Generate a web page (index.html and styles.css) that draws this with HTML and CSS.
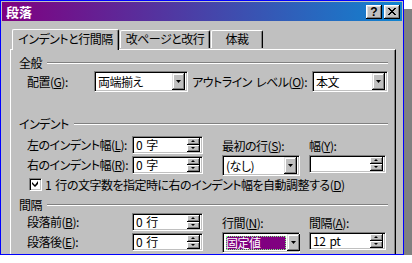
FILE: index.html
```html
<!DOCTYPE html>
<html lang="ja">
<head>
    <meta charset="UTF-8">
    <title>段落</title>
    <link rel="stylesheet" href="styles.css">
</head>
<body>
    <div class="window">
        <!-- Caption bar -->
        <div class="titlebar">
            <span class="title">段落</span>
            <div class="caption-buttons">
                <span class="cap-btn help">?</span>
                <span class="cap-btn">
                    <svg width="8" height="7" viewBox="0 0 8 7"><path d="M0 0h2v1h-2zM6 0h2v1h-2zM1 1h2v1h-2zM5 1h2v1h-2zM2 2h4v1h-4zM3 3h2v1h-2zM2 4h4v1h-4zM1 5h2v1h-2zM5 5h2v1h-2zM0 6h2v1h-2zM6 6h2v1h-2z" fill="#000"/></svg>
                </span>
            </div>
        </div>

        <!-- Tabs -->
        <div class="tabs">
            <div class="tab tab-indent active">インデントと行間隔</div>
            <div class="tab tab-break">改ページと改行</div>
            <div class="tab tab-style">体裁</div>
        </div>

        <div class="panel">
            <!-- General -->
            <div class="group-head"><span>全般</span><i class="etch"></i></div>
            <div class="row general-row">
                <label class="lbl lbl-align">配置(<u>G</u>):</label>
                <div class="combo combo-align">
                    <span class="value">両端揃え</span>
                    <span class="drop"><svg width="5" height="3" viewBox="0 0 5 3"><path d="M0 0h5l-2.5 3z" fill="#000"/></svg></span>
                </div>
                <label class="lbl lbl-outline">アウトライン レベル(<u>O</u>):</label>
                <div class="combo combo-outline">
                    <span class="value">本文</span>
                    <span class="drop"><svg width="5" height="3" viewBox="0 0 5 3"><path d="M0 0h5l-2.5 3z" fill="#000"/></svg></span>
                </div>
            </div>

            <!-- Indent -->
            <div class="group-head head-indent"><span>インデント</span><i class="etch"></i></div>
            <div class="section indent-section">
                <div class="left-col">
                    <div class="row">
                        <label class="lbl lbl-side">左のインデント幅(<u>L</u>):</label>
                        <div class="spin"><span class="value">0 字</span><span class="spin-btns"><span class="up"></span><span class="down"></span></span></div>
                    </div>
                    <div class="row">
                        <label class="lbl lbl-side">右のインデント幅(<u>R</u>):</label>
                        <div class="spin"><span class="value">0 字</span><span class="spin-btns"><span class="up"></span><span class="down"></span></span></div>
                    </div>
                </div>
                <div class="field-col col-first">
                    <label class="lbl">最初の行(<u>S</u>):</label>
                    <div class="combo combo-first">
                        <span class="value">(なし)</span>
                        <span class="drop"><svg width="5" height="3" viewBox="0 0 5 3"><path d="M0 0h5l-2.5 3z" fill="#000"/></svg></span>
                    </div>
                </div>
                <div class="field-col col-width">
                    <label class="lbl">幅(<u>Y</u>):</label>
                    <div class="spin spin-width"><span class="value"></span><span class="spin-btns"><span class="up"></span><span class="down"></span></span></div>
                </div>
            </div>
            <div class="check-row">
                <span class="checkbox"><svg width="7" height="7" viewBox="0 0 7 7"><path d="M6 0v3l-3 3-3-3v-2l3 3z" fill="#000"/></svg></span>
                <span>1 行の文字数を指定時に右のインデント幅を自動調整する(<u>D</u>)</span>
            </div>

            <!-- Spacing -->
            <div class="group-head head-spacing"><span>間隔</span><i class="etch"></i></div>
            <div class="section spacing-section">
                <div class="left-col">
                    <div class="row">
                        <label class="lbl lbl-side">段落前(<u>B</u>):</label>
                        <div class="spin"><span class="value">0 行</span><span class="spin-btns"><span class="up"></span><span class="down"></span></span></div>
                    </div>
                    <div class="row">
                        <label class="lbl lbl-side">段落後(<u>E</u>):</label>
                        <div class="spin"><span class="value">0 行</span><span class="spin-btns"><span class="up"></span><span class="down"></span></span></div>
                    </div>
                </div>
                <div class="field-col col-first col-low">
                    <label class="lbl">行間(<u>N</u>):</label>
                    <div class="combo combo-first">
                        <span class="value selected">固定値</span>
                        <span class="drop"><svg width="5" height="3" viewBox="0 0 5 3"><path d="M0 0h5l-2.5 3z" fill="#000"/></svg></span>
                    </div>
                </div>
                <div class="field-col col-width col-low">
                    <label class="lbl">間隔(<u>A</u>):</label>
                    <div class="spin spin-width"><span class="value">12 pt</span><span class="spin-btns"><span class="up"></span><span class="down"></span></span></div>
                </div>
            </div>
        </div>
    </div>
</body>
</html>
```

FILE: styles.css
```css
* {
    margin: 0;
    padding: 0;
    box-sizing: border-box;
}

body {
    background: #ffffff;
    font-family: "Noto Sans CJK JP", sans-serif;
    font-size: 12px;
    font-feature-settings: "palt";
    letter-spacing: -0.5px;
    word-spacing: 2px;
    color: #000000;
}

u {
    text-decoration: underline;
    text-underline-offset: 1px;
}

/* Dialog window with its drop shadow */
.window {
    width: 404px;
    height: 255px;
    border: 1px solid #0000ff;
    padding: 1px;
    background: #c0c0c0;
    box-shadow: 8px 9px 0 #808080;
    overflow: hidden;
}

.titlebar {
    height: 19px;
    display: flex;
    align-items: center;
    justify-content: space-between;
    padding: 0 2px 0 4px;
    background: linear-gradient(to right, #800080, #1084d0);
}

.title {
    color: #ffffff;
    font-weight: bold;
    font-size: 13px;
    line-height: 19px;
    letter-spacing: 0;
}

.caption-buttons {
    display: flex;
    gap: 2px;
}

.cap-btn {
    width: 16px;
    height: 14px;
    display: flex;
    align-items: center;
    justify-content: center;
    background: #c0c0c0;
    box-shadow: inset -1px -1px #000000, inset 1px 1px #ffffff, inset -2px -2px #808080, inset 2px 2px #dfdfdf;
}

.cap-btn.help {
    font-family: "Liberation Sans", sans-serif;
    font-weight: bold;
    font-size: 12px;
    line-height: 14px;
    letter-spacing: 0;
}

/* Tabs */
.tabs {
    height: 28px;
    margin-left: 8px;
    display: flex;
    align-items: flex-end;
    position: relative;
    z-index: 1;
}

.tab {
    height: 18px;
    margin-right: 1px;
    background: #c0c0c0;
    border-top: 1px solid #ffffff;
    border-left: 1px solid #ffffff;
    border-right: 1px solid #000000;
    border-radius: 2px 2px 0 0;
    box-shadow: inset -1px 0 #808080;
    text-align: center;
    line-height: 16px;
    margin-bottom: 1px;
}

.tab.active {
    height: 21px;
    margin-left: 2px;
    margin-bottom: -1px;
    line-height: 18px;
}

.tab-indent { width: 107px; }
.tab-break { width: 90px; }
.tab-style { width: 52px; }

/* Tab page */
.panel {
    margin-left: 8px;
    width: 386px;
    height: 240px;
    border-top: 1px solid #ffffff;
    border-left: 1px solid #ffffff;
    border-right: 1px solid #000000;
    box-shadow: inset -1px 0 #808080;
    padding: 7px 7px 0 8px;
}

.group-head {
    height: 12px;
    display: flex;
    align-items: center;
    line-height: 12px;
}

.etch {
    flex: 1;
    height: 2px;
    margin-left: 5px;
    border-top: 1px solid #808080;
    border-bottom: 1px solid #ffffff;
}

.head-indent { margin-top: 26px; }
.head-spacing { margin-top: 8px; }

.row {
    display: flex;
    align-items: center;
}

.general-row {
    margin-top: 2px;
    padding-left: 8px;
}

.lbl {
    line-height: 12px;
    white-space: nowrap;
}

.lbl-align { width: 67px; }
.lbl-outline { margin-left: auto; margin-right: 5px; }
.lbl-side { width: 105px; }

/* Sunken fields */
.combo,
.spin {
    position: relative;
    background: #ffffff;
    border-top: 1px solid #808080;
    border-left: 1px solid #808080;
    border-bottom: 1px solid #ffffff;
    border-right: 1px solid #ffffff;
    box-shadow: inset 1px 1px #000000, inset -1px -1px #c0c0c0;
    display: flex;
    align-items: center;
    padding: 2px 2px 2px 3px;
}

.combo { height: 21px; }
.spin { height: 18px; width: 71px; }

.combo-align { width: 94px; }
.combo-outline { width: 76px; }
.combo-first { width: 78px; }
.spin-width { width: 77px; }

.value {
    flex: 1;
    line-height: 14px;
    white-space: nowrap;
}

.drop {
    width: 13px;
    height: 17px;
    flex: none;
    display: flex;
    align-items: center;
    justify-content: center;
    background: #c0c0c0;
    box-shadow: inset -1px -1px #000000, inset 1px 1px #dfdfdf, inset -2px -2px #808080, inset 2px 2px #ffffff;
}

.spin-btns {
    width: 13px;
    height: 14px;
    flex: none;
    display: flex;
    flex-direction: column;
}

.spin-btns span {
    flex: 1;
    position: relative;
    background: #c0c0c0;
    box-shadow: inset -1px -1px #000000, inset 1px 1px #ffffff, inset -2px -2px #808080;
}

.spin-btns span::after {
    content: "";
    position: absolute;
    left: 4px;
    top: 2px;
    border-left: 2px solid transparent;
    border-right: 2px solid transparent;
}

.spin-btns .up::after { border-bottom: 2px solid #000000; }
.spin-btns .down::after { border-top: 2px solid #000000; }

/* Indent and spacing blocks */
.section {
    display: flex;
    padding-left: 8px;
}

.indent-section { margin-top: 6px; }
.spacing-section { margin-top: 2px; }

.left-col {
    display: flex;
    flex-direction: column;
    gap: 2px;
}

.field-col {
    display: flex;
    flex-direction: column;
    margin-top: 4px;
}

.field-col .lbl { margin-bottom: 3px; }

.col-first { margin-left: 19px; }
.col-width { margin-left: 9px; }
.col-low { margin-top: 4px; }

.check-row {
    margin-top: 2px;
    padding-left: 10px;
    display: flex;
    align-items: center;
    gap: 3px;
    line-height: 13px;
}

.checkbox {
    width: 13px;
    height: 13px;
    display: flex;
    align-items: center;
    justify-content: center;
    background: #ffffff;
    border-top: 1px solid #808080;
    border-left: 1px solid #808080;
    border-bottom: 1px solid #ffffff;
    border-right: 1px solid #ffffff;
    box-shadow: inset 1px 1px #000000, inset -1px -1px #c0c0c0;
}

.selected {
    flex: none;
    width: 60px;
    margin-right: 1px;
    background: #800080;
    color: #ffffff;
    outline: 1px dotted #80ff80;
    outline-offset: -1px;
}
```
